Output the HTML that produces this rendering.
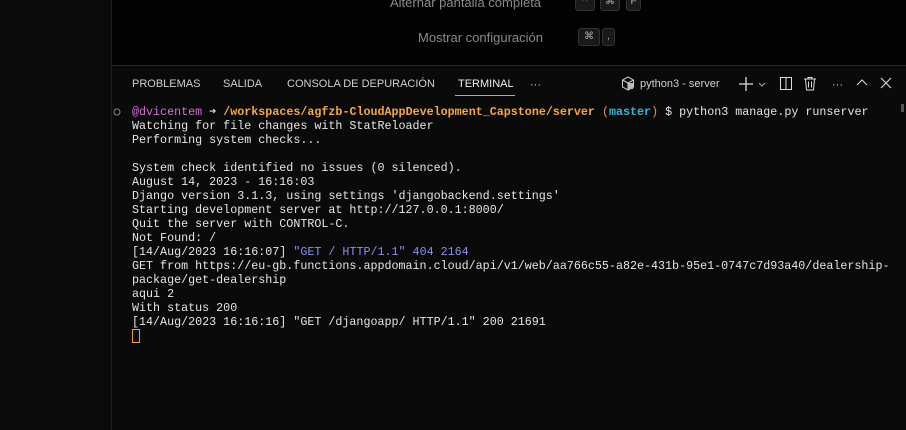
<html><head><style>
body{margin:0;width:906px;height:430px;background:#0b0b0b;overflow:hidden;position:relative;font-family:"Liberation Sans",sans-serif}
#side{position:absolute;left:0;top:0;width:111px;height:430px;background:#0b0b0b;border-right:1px solid #1e1e1e}
#ed{position:absolute;left:112px;top:0;right:0;height:65px;background:#020202;border-bottom:1px solid #2a2a2a}
.sc{position:absolute;font-size:13px;color:#8a8a8a}
.k{position:absolute;height:16px;background:#1a1a1a;border:1px solid #333;border-radius:3px;color:#aaa;font-size:10px;text-align:center;line-height:16px}
#panel{position:absolute;left:112px;top:66px;right:0;bottom:0;background:#0a0a0a}
.tab{position:absolute;top:78px;font-size:11px;color:#cfcfcf}
#term{position:absolute;left:132px;top:105px;font-family:"Liberation Mono",monospace;font-size:11.7px;line-height:14px;color:#e5e5e5;white-space:pre}
</style></head><body>
<div id="side"></div>
<div id="ed">
<div class="sc" style="left:278px;top:-5px">Alternar pantalla completa</div>
<div class="k" style="left:463px;top:-7px;width:18px">^</div>
<div class="k" style="left:488px;top:-7px;width:18px">⌘</div>
<div class="k" style="left:514px;top:-7px;width:13px">F</div>
<div class="sc" style="left:306px;top:30px">Mostrar configuración</div>
<div class="k" style="left:466px;top:28px;width:20px">⌘</div>
<div class="k" style="left:490px;top:28px;width:11px">,</div>
</div>
<div id="panel"></div>
<div class="tab" style="left:132px">PROBLEMAS</div>
<div class="tab" style="left:223px">SALIDA</div>
<div class="tab" style="left:287px">CONSOLA DE DEPURACIÓN</div>
<div class="tab" style="left:458px;color:#eee">TERMINAL</div>
<div style="position:absolute;left:455px;top:95px;width:60px;height:1px;background:#f0a030"></div>
<div class="tab" style="left:530px;top:79px">···</div>
<svg style="position:absolute;left:621px;top:76px" width="14" height="15" viewBox="0 0 14 15"><path d="M7 1L12.5 4v7L7 14 1.5 11V4z" fill="none" stroke="#ccc"/><path d="M7 7v7M1.5 4L7 7l5.5-3" stroke="#ccc" fill="none"/><rect x="7" y="7" width="5" height="6" fill="#bbb"/></svg>
<div class="tab" style="left:640px">python3 - server</div>
<svg style="position:absolute;left:738px;top:76px" width="30" height="16"><path d="M8 1v14M1 8h14" stroke="#ddd" stroke-width="1.3"/><path d="M21 7l3 3 3-3" stroke="#aaa" fill="none"/></svg>
<svg style="position:absolute;left:779px;top:76px" width="14" height="15"><rect x="1.5" y="1.5" width="11" height="12" fill="none" stroke="#ddd"/><path d="M7 1.5v12" stroke="#ddd"/></svg>
<svg style="position:absolute;left:803px;top:76px" width="14" height="15"><path d="M1 3h12M5 3V1.5h4V3M2.5 3l1 11h7l1-11M5.5 5.5v6M8.5 5.5v6" stroke="#ddd" fill="none"/></svg>
<div class="tab" style="left:832px;top:79px">···</div>
<svg style="position:absolute;left:856px;top:78px" width="12" height="10"><path d="M1 7l5-5 5 5" stroke="#ddd" fill="none"/></svg>
<svg style="position:absolute;left:880px;top:77px" width="12" height="12"><path d="M1 1l10 10M11 1L1 11" stroke="#ddd"/></svg>
<svg style="position:absolute;left:112px;top:107px" width="10" height="10"><circle cx="5" cy="5" r="3" fill="none" stroke="#888"/></svg>
<div style="position:absolute;left:901px;top:104px;width:3px;height:8px;background:#555"></div>
<div id="term"><span style="color:#d670d6">@dvicentem</span> <span style="color:#ddd">➜</span> <b style="color:#f5a742">/workspaces/agfzb-CloudAppDevelopment_Capstone/server</b> <span style="color:#f08a5d">(</span><b style="color:#29b8db">master</b><span style="color:#f08a5d">)</span> $ python3 manage.py runserver
Watching for file changes with StatReloader
Performing system checks...

System check identified no issues (0 silenced).
August 14, 2023 - 16:16:03
Django version 3.1.3, using settings 'djangobackend.settings'
Starting development server at http://127.0.0.1:8000/
Quit the server with CONTROL-C.
Not Found: /
[14/Aug/2023 16:16:07] <span style="color:#8c8cf0">"GET / HTTP/1.1" 404 2164</span>
GET from https://eu-gb.functions.appdomain.cloud/api/v1/web/aa766c55-a82e-431b-95e1-0747c7d93a40/dealership-
package/get-dealership
aqui 2
With status 200
[14/Aug/2023 16:16:16] "GET /djangoapp/ HTTP/1.1" 200 21691
<span style="display:inline-block;width:6px;height:12px;border:1px solid #f0a030;vertical-align:middle"></span></div>
</body></html>
